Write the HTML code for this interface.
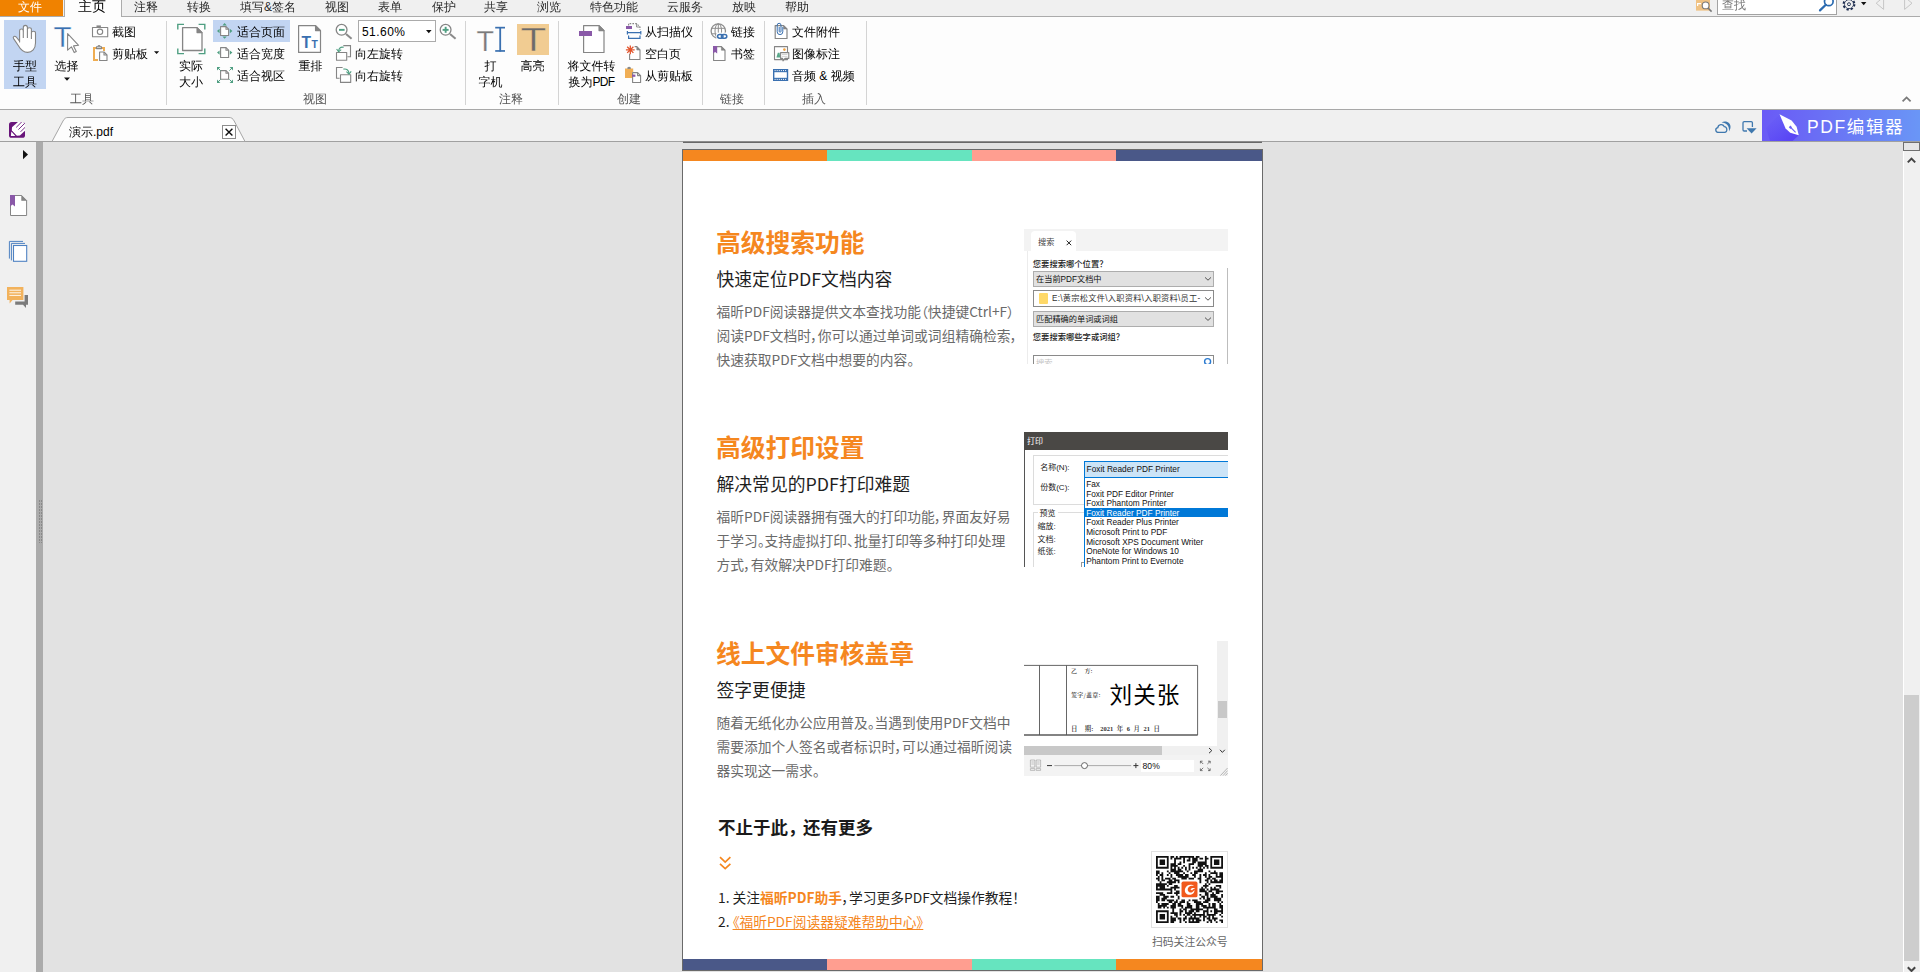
<!DOCTYPE html>
<html lang="zh-CN">
<head>
<meta charset="utf-8">
<title>演示.pdf</title>
<style>
*{box-sizing:border-box;margin:0;padding:0}
html,body{width:1920px;height:972px;overflow:hidden;background:#e2e2e2}
body{position:relative;font-family:"Liberation Sans","WenQuanYi Zen Hei","Noto Sans CJK SC",sans-serif;font-size:12px;color:#1e1e1e}
.abs{position:absolute}
svg{position:absolute;overflow:visible}
/* menu bar */
#menubar{position:absolute;left:0;top:0;width:1920px;height:17px;background:#f0f0f0;border-bottom:1px solid #ababab}
#menubar .mi{position:absolute;top:-1.3px;height:16px;line-height:16px;font-size:12px;color:#2a2a2a;white-space:nowrap}
#filetab{position:absolute;left:0;top:0;width:63px;height:16px;background:#f08200}
#hometab{position:absolute;left:64px;top:-4px;width:58px;height:22px;background:#fdfdfd;border:1px solid #ababab;border-bottom:none}
/* ribbon */
#ribbon{position:absolute;left:0;top:17px;width:1920px;height:93px;background:#fdfdfd;border-bottom:1px solid #a8a8a8}
.sep{position:absolute;top:21px;width:1px;height:84px;background:#d4d4d4}
.t{position:absolute;white-space:nowrap;font-size:12px;line-height:14px;color:#000}
.tc{position:absolute;white-space:nowrap;font-size:12px;line-height:16px;color:#000;text-align:center;transform:translateX(-50%)}
.gl{position:absolute;top:92px;white-space:nowrap;font-size:12px;line-height:14px;color:#555;transform:translateX(-50%)}
.hl{position:absolute;background:#c2d5f2}
/* tab bar */
#tabbar{position:absolute;left:0;top:110px;width:1920px;height:32px;background:#f0f0f0;border-bottom:1px solid #a0a0a0}
/* sidebar */
#side{position:absolute;left:0;top:142px;width:36px;height:830px;background:#f0f0f0}
#grip{position:absolute;left:36px;top:142px;width:7px;height:830px;background:#ababab}
/* scrollbar */
#vscroll{position:absolute;left:1903px;top:142px;width:17px;height:830px;background:#f0f0f0;border-left:1px solid #fff}
/* page */
#page{position:absolute;left:682px;top:149px;width:581px;height:822px;background:#fff;border:1px solid #6a6a6a;font-family:"Noto Sans CJK SC","Liberation Sans",sans-serif}
#page .in{position:absolute;left:-683px;top:-150px;width:1920px;height:972px}
.bar{position:absolute;height:11px}
.pimg{position:absolute;left:1024px;width:204px;overflow:hidden;background:#fff;font-family:"Liberation Sans","Noto Sans CJK SC",sans-serif;color:#222}
.pimg>div{position:absolute;white-space:nowrap}
.pimg .sp{display:inline-block}
.h1{position:absolute;left:716px;font-size:24.75px;font-weight:700;color:#f5871f;line-height:30px;white-space:nowrap}
.h2{position:absolute;left:716.5px;font-size:17.82px;color:#1f1f1f;line-height:24px;white-space:nowrap}
.bd{position:absolute;left:716.5px;font-size:13.76px;color:#6a6a6a;line-height:24px;white-space:nowrap;font-feature-settings:"palt"}
</style>
</head>
<body>

<!-- ============ MENU BAR ============ -->
<div id="menubar">
  <div id="filetab"></div>
  <div id="hometab"></div>
  <div class="mi" style="left:18px;color:#fff">文件</div>
  <div class="mi" style="left:78px;font-size:14px;color:#000;top:-2px">主页</div>
  <div class="mi" style="left:134px">注释</div>
  <div class="mi" style="left:187px">转换</div>
  <div class="mi" style="left:240px">填写&amp;签名</div>
  <div class="mi" style="left:325px">视图</div>
  <div class="mi" style="left:378px">表单</div>
  <div class="mi" style="left:432px">保护</div>
  <div class="mi" style="left:484px">共享</div>
  <div class="mi" style="left:537px">浏览</div>
  <div class="mi" style="left:590px">特色功能</div>
  <div class="mi" style="left:667px">云服务</div>
  <div class="mi" style="left:732px">放映</div>
  <div class="mi" style="left:785px">帮助</div>
</div>

<!-- ============ RIBBON ============ -->
<div id="ribbon"></div>
<div id="ribbonitems">
  <div class="hl" style="left:4px;top:20px;width:42px;height:69px"></div>
  <div class="hl" style="left:213px;top:20px;width:77px;height:22px"></div>
  <div class="abs" style="left:517px;top:24px;width:32px;height:31px;background:#f1cc92"></div>
  <div class="sep" style="left:166px"></div>
  <div class="sep" style="left:465px"></div>
  <div class="sep" style="left:558px"></div>
  <div class="sep" style="left:702px"></div>
  <div class="sep" style="left:764px"></div>
  <div class="sep" style="left:866px"></div>

  <div class="tc" style="left:25px;top:58px">手型<br>工具</div>
  <div class="tc" style="left:66.5px;top:58px">选择</div>
  <div class="t" style="left:112px;top:25px">截图</div>
  <div class="t" style="left:112px;top:47px">剪贴板</div>
  <div class="tc" style="left:191px;top:58px">实际<br>大小</div>
  <div class="t" style="left:237px;top:25px">适合页面</div>
  <div class="t" style="left:237px;top:47px">适合宽度</div>
  <div class="t" style="left:237px;top:69px">适合视区</div>
  <div class="tc" style="left:310.5px;top:58px">重排</div>
  <div class="abs" style="left:358px;top:20px;width:78px;height:22px;border:1px solid #ababab;background:#fff"></div>
  <div class="t" style="left:362px;top:25px;font-size:12px;letter-spacing:0.45px;color:#000">51.60%</div>
  <div class="t" style="left:355px;top:47px">向左旋转</div>
  <div class="t" style="left:355px;top:69px">向右旋转</div>
  <div class="tc" style="left:490.5px;top:58px">打<br>字机</div>
  <div class="tc" style="left:532.5px;top:58px">高亮</div>
  <div class="tc" style="left:591.5px;top:58px">将文件转<br>换为<span style="letter-spacing:-0.7px">PDF</span></div>
  <div class="t" style="left:645px;top:25px">从扫描仪</div>
  <div class="t" style="left:645px;top:47px">空白页</div>
  <div class="t" style="left:645px;top:69px">从剪贴板</div>
  <div class="t" style="left:731px;top:25px">链接</div>
  <div class="t" style="left:731px;top:47px">书签</div>
  <div class="t" style="left:792px;top:25px">文件附件</div>
  <div class="t" style="left:792px;top:47px">图像标注</div>
  <div class="t" style="left:792px;top:69px">音频 &amp; 视频</div>

  <div class="gl" style="left:82px">工具</div>
  <div class="gl" style="left:315px">视图</div>
  <div class="gl" style="left:511px">注释</div>
  <div class="gl" style="left:629px">创建</div>
  <div class="gl" style="left:732px">链接</div>
  <div class="gl" style="left:814px">插入</div>

  <svg id="ricons" style="left:0;top:0" width="1920" height="110" viewBox="0 0 1920 110" fill="none" stroke-linecap="butt">
    <g stroke="#858585" stroke-width="1.1" fill="#fff" stroke-linejoin="round">
      <!-- hand -->
      <path d="M19.6 42V30.8C19.6 28.3 23.3 28.3 23.3 30.8V27.5C23.3 24.6 27.4 24.6 27.4 27.5V29.6C27.4 27.1 31.4 27.1 31.4 29.6V33C31.4 30.6 35.5 30.6 35.5 33V43C35.5 49 32 52.4 27.6 52.4C23 52.4 20.6 49.6 18.6 46L13.6 38.6C12.5 36.8 14.6 35.4 16.2 37L19.6 41.2Z"/>
      <path d="M23.3 30.8V38M27.4 29.6V38M31.4 33V39" fill="none"/>
      <!-- select cursor -->
      <path d="M67.6 33.6V50.2L71.4 46.8L74.2 52.6L76.3 51.6L73.5 45.9L78.6 45.3Z"/>
      <!-- camera -->
      <rect x="92.5" y="27.5" width="15.2" height="9.2"/>
      <circle cx="100" cy="31.8" r="2.7"/>
      <rect x="96.5" y="25.4" width="4.4" height="1.6" fill="#858585" stroke="none"/>
      <!-- clipboard -->
      <path d="M104 51V48H94V60H98" stroke="#efad52" stroke-width="2" fill="none" stroke-linejoin="miter"/>
      <path d="M96.5 48.6V46.8H101.5V48.6Z" fill="#e8e8e8"/>
      <path d="M97.8 46.6Q99 44.4 100.2 46.6" fill="none"/>
      <path d="M99.6 52H104L107 55V60.5H99.6Z"/>
      <path d="M104 52V55H107" fill="none"/>
      <!-- actual size page -->
      <path d="M182.6 27.6H197L202 32.6V50.5H182.6Z" stroke-width="1.3"/>
      <path d="M197 27.6V32.6H202Z" fill="#858585"/>
      <!-- fit page -->
      <path d="M220.6 26.6H226L228.6 29.2V35.5H220.6Z"/>
      <path d="M226 26.6V29.2H228.6" fill="none"/>
      <!-- fit width -->
      <path d="M220.6 47.6H226L228.6 50.2V57.5H220.6Z"/>
      <path d="M226 47.6V50.2H228.6" fill="none"/>
      <!-- fit visible -->
      <path d="M220.6 70.6H226L228.6 73.2V79.3H220.6Z"/>
      <path d="M226 70.6V73.2H228.6" fill="none"/>
      <!-- reflow page -->
      <path d="M298.6 25.6H315.5L320.5 30.6V52.4H298.6Z" stroke-width="1.2"/>
      <path d="M315.5 25.6V30.6H320.5Z" fill="#858585"/>
      <!-- zoom out / in -->
      <path d="M346 34L351.6 38.8" stroke-width="2" stroke="#8a8a8a"/>
      <circle cx="341.6" cy="29.8" r="5.4" stroke-width="1.3"/>
      <path d="M450 34L455.6 38.8" stroke-width="2" stroke="#8a8a8a"/>
      <circle cx="445.6" cy="29.8" r="5.4" stroke-width="1.3"/>
      <!-- rotate left -->
      <path d="M343.3 45.6H350.5V56.7H347.4" fill="none" stroke-linejoin="miter"/>
      <rect x="336.5" y="52.5" width="10.2" height="7.7"/>
      <!-- rotate right -->
      <path d="M342.6 67.5H336.5V78.3H339.6" fill="none" stroke-linejoin="miter"/>
      <rect x="340.5" y="74.7" width="10.2" height="7.7"/>
      <!-- convert to pdf page -->
      <path d="M583.6 25.6H599L604 30.6V52.5H583.6Z" stroke-width="1.2"/>
      <path d="M599 25.6V30.6H604Z" fill="#858585"/>
      <!-- scanner page (dashed) -->
      <path d="M628.6 25.4V23.6H636.6L640 27V30" fill="none" stroke-dasharray="1.6 1.2"/>
      <path d="M636.6 23.6V27H640" fill="none" stroke-width="0.9"/>
      <!-- blank page -->
      <path d="M629.6 54V59.5H640V50L636.8 46.6H634.6" />
      <path d="M636.8 46.6V50H640Z" fill="#858585" stroke-width="0.6"/>
      <!-- from clipboard -->
      <path d="M632.6 72.6H637.6L640.6 75.6V82.5H632.6Z"/>
      <path d="M637.6 72.6V75.6H640.6" fill="none"/>
      <!-- globe -->
      <circle cx="718.3" cy="31" r="7.2" stroke="#8d8d8d" stroke-width="1.3"/>
      <ellipse cx="718.3" cy="31" rx="3.3" ry="7.2" fill="none" stroke="#8d8d8d" stroke-width="1"/>
      <path d="M718.3 23.8V38.2M711.6 28.3H725M711.6 33.8H725" stroke="#8d8d8d" stroke-width="1" fill="none"/>
      <rect x="716.4" y="32.6" width="11.2" height="7" stroke="none"/>
      <!-- bookmark page -->
      <path d="M713.6 46.6H721.4L725 50.2V60.5H713.6Z"/>
      <path d="M721.4 46.6V50.2H725Z" fill="#858585" stroke-width="0.6"/>
      <!-- attachment page -->
      <path d="M775.2 25.6H783.6L787 29V38.5H775.2Z" stroke-width="1.2"/>
      <path d="M783.6 25.6V29H787Z" fill="#858585" stroke-width="0.6"/>
      <!-- image annotation -->
      <rect x="774.5" y="46.6" width="13" height="13"/>
      <path d="M780.6 52.6H788.8V58.4H785L783 60.8L782.6 58.4H780.6Z"/>
      <path d="M782 54.5H787.4M782 56.4H787.4" stroke="#c9c9c9" stroke-width="0.8" fill="none"/>
    </g>
    <!-- coloured parts -->
    <g fill="#4f9f82" stroke="none">
      <!-- fit page arrows -->
      <path d="M217 31L219.6 28.8V33.2ZM232.4 31L229.8 28.8V33.2ZM224.6 23L222.4 25.4H226.8ZM224.6 38.8L222.4 36.6H226.8Z"/>
      <path d="M217 52.6L219.6 50.4V54.8ZM232.4 52.6L229.8 50.4V54.8Z"/>
      <!-- fit visible arrows -->
      <path d="M217 67H220.4L217 70.4ZM233 67H229.6L233 70.4ZM217 83H220.4L217 79.6ZM233 83H229.6L233 79.6Z"/>
      <!-- zoom minus/plus -->
      <rect x="339" y="28.9" width="5.6" height="1.9"/>
      <rect x="442.6" y="28.9" width="6" height="1.9"/>
      <rect x="444.7" y="26.8" width="1.9" height="6"/>
    </g>
    <g fill="none" stroke="#4f9f82" stroke-width="1">
      <path d="M218 68L220.6 70.6M232 68L229.4 70.6M218 82L220.6 79.4M232 82L229.4 79.4"/>
      <path d="M177.8 29.6V24.4H184M198.6 24.4H204.8V29.6M177.8 48.4V53.6H184M198.6 53.6H204.8V48.4" stroke-width="1.4"/>
      <!-- rotate arrows -->
      <path d="M343.6 47.4C341 46.4 338.8 47.8 338.6 51.4" stroke-width="1.2"/>
      <path d="M336.6 49L338.6 51.8L341.2 49.6" stroke-width="1.1"/>
      <path d="M343.4 69.2C346.4 68.4 348.8 70 349 73.6" stroke-width="1.2"/>
      <path d="M346.4 71.6L349 74.2L351.2 71.4" stroke-width="1.1"/>
    </g>
    <!-- green mountain / sun -->
    <path d="M776.4 57.6L777.8 52.8H779.6L780.2 57.6Z" fill="#5aa88a"/>
    <circle cx="784.4" cy="49.6" r="1.3" fill="#f0a040"/>
    <!-- blue parts -->
    <g fill="#3a70b0" stroke="none">
      <rect x="495.2" y="26.8" width="9.8" height="1.7"/>
      <rect x="495.2" y="50.1" width="9.8" height="1.7"/>
      <rect x="499.3" y="27" width="1.8" height="24.6"/>
      <!-- film -->
      <rect x="773" y="69" width="15.2" height="12"/>
    </g>
    <rect x="774.4" y="72.2" width="12.4" height="5.6" fill="#fff"/>
    <path d="M774.6 70.6H787M774.6 79.4H787" stroke="#fff" stroke-width="1" stroke-dasharray="1 1.1" fill="none"/>
    <g fill="none" stroke="#3a70b0" stroke-width="1.2">
      <!-- scanner -->
      <path d="M627 32.7H641M627.4 31V34.6M640.8 31V34.6M628.6 35.6V38.4H640V35.6"/>
      <!-- chain link -->
      <rect x="717.6" y="34.4" width="5.4" height="3.8" rx="1.9" stroke-width="1.5"/>
      <rect x="721.4" y="34.4" width="5.4" height="3.8" rx="1.9" stroke-width="1.5"/>
      <!-- paperclip -->
      <path d="M779.2 27V31.3A0.9 0.9 0 0 0 781 31.3V25.2A1.9 1.9 0 0 0 777.2 25.2V31.8A2.8 2.8 0 0 0 782.8 31.8V27" stroke-width="1"/>
    </g>
    <!-- purple parts -->
    <g fill="#8a59a8" stroke="none">
      <rect x="579" y="31" width="13" height="5"/>
      <rect x="626" y="26" width="6" height="3"/>
      <rect x="631" y="74.6" width="4.4" height="2.2"/>
      <path d="M713 46H717.2V53.4L715.1 52L713 53.4Z"/>
    </g>
    <!-- orange clipboard (from clipboard) -->
    <path d="M625 68.6H633.2V72H632V78H625Z" fill="#f0ae55"/>
    <path d="M627.4 69V67.6Q629.1 66 630.8 67.6V69Z" fill="#8a8a8a"/>
    <!-- red asterisk -->
    <path d="M630.3 45.4V54.2M625.9 49.8H634.7M627.2 46.7L633.4 52.9M633.4 46.7L627.2 52.9" stroke="#e2532b" stroke-width="1.3" fill="none"/>
    <!-- dropdown arrows -->
    <path d="M64 77.6H70L67 80.8ZM154 51.2H159.2L156.6 54ZM426 30H431.6L428.8 33.2Z" fill="#111"/>
    <!-- icon letters (real text) -->
    <g font-family="Liberation Sans,sans-serif" stroke="none">
      <text x="53.6" y="47" font-size="29.6" fill="#3a70b0" stroke="#fdfdfd" stroke-width="0.35">T</text>
      <text x="476.4" y="51" font-size="28.6" fill="#7b7b7b" stroke="#fdfdfd" stroke-width="0.25">T</text>
      <text transform="translate(520.6 51) scale(1.3 1)" font-size="32.6" fill="#6b6b6b" stroke="#f1cc92" stroke-width="0.45">T</text>
      <text x="301.4" y="48" font-size="15.6" font-weight="700" fill="#3a70b0">T</text>
      <text x="311.4" y="48" font-size="10.4" font-weight="700" fill="#3a70b0">T</text>
    </g>
    <!-- menu right icons -->
    <rect x="1696" y="-2" width="14" height="12.6" fill="#f0c283"/>
    <path d="M1697.6 6V3.6H1701" stroke="#fff" stroke-width="1.2" fill="none"/>
    <path d="M1708 8L1711.6 11.6" stroke="#777" stroke-width="1.6" fill="none"/>
    <circle cx="1705.6" cy="5.4" r="3.4" fill="#fff" stroke="#777" stroke-width="1.1"/>
    <rect x="1717.5" y="-4" width="119" height="18.5" fill="#fff" stroke="#a3a3a3" stroke-width="1"/>
    <circle cx="1828.8" cy="1.4" r="4.3" fill="none" stroke="#2a6ab0" stroke-width="1.7"/>
    <path d="M1825.8 4.8L1820 10.4" stroke="#2a6ab0" stroke-width="2.2" stroke-linecap="round" fill="none"/>
    <circle cx="1849" cy="4.2" r="5.4" fill="none" stroke="#1c2b4d" stroke-width="2" stroke-dasharray="2.3 1.95"/>
    <circle cx="1849" cy="4.2" r="4.4" fill="none" stroke="#1c2b4d" stroke-width="0.8"/>
    <circle cx="1849" cy="4.2" r="3.7" fill="#f0f0f0" stroke="none"/>
    <circle cx="1849" cy="4.2" r="1.5" fill="none" stroke="#1c2b4d" stroke-width="0.9"/>
    <path d="M1861 2H1866.4L1863.7 5.2Z" fill="#111"/>
    <path d="M1883.6 -3V9.4L1876.2 3.2Z" fill="none" stroke="#c6c6c6" stroke-width="1"/>
    <path d="M1904.6 -3V9.4L1912 3.2Z" fill="none" stroke="#c6c6c6" stroke-width="1"/>
    <!-- collapse caret -->
    <path d="M1902.6 101.4L1906.6 97.4L1910.6 101.4" stroke="#7a7a7a" stroke-width="1.8" fill="none"/>
  </svg>
  <div class="t" style="left:1722px;top:-2px;color:#777;line-height:14px">查找</div>
</div>

<!-- ============ TAB BAR ============ -->
<div id="tabbar">
  <svg style="left:0;top:0" width="1920" height="32" viewBox="0 110 1920 32" fill="none">
    <!-- foxit logo -->
    <clipPath id="fxc"><rect x="9" y="122" width="16" height="15.8" rx="2.6"/></clipPath>
    <rect x="9" y="122" width="16" height="15.8" rx="2.6" fill="#68147a"/>
    <g clip-path="url(#fxc)">
      <path d="M12 127.2L18.6 121.4H25.6V130.2L19.9 135.4L16.6 135.8L11.8 130.8Z" fill="#fff"/>
      <path d="M16.2 127.4L22 121.6M18.4 129.6L25.4 122.6M20.6 131.8L25.6 126.8" stroke="#68147a" stroke-width="0.9"/>
      <path d="M11.2 130.4L16.8 136.4" stroke="#68147a" stroke-width="0.8"/>
      <path d="M10.9 135.9L11.3 131.6L15.4 135.9Z" fill="#fff"/>
    </g>
    <!-- doc tab -->
    <path d="M52 141.5L63 121C64.5 118.4 65.6 117.5 68 117.5H229C231.4 117.5 232.8 118.4 234.2 121L245 141.5Z" fill="#fdfdfd" stroke="#a6a6a6" stroke-width="1"/>
    <rect x="222.5" y="125.5" width="13" height="13" fill="#fff" stroke="#8c8c8c"/>
    <path d="M225.6 128.8L232.4 135.6M232.4 128.8L225.6 135.6" stroke="#111" stroke-width="1.4"/>
    <!-- cloud -->
    <path d="M1718.8 132.4C1715.4 132.4 1714.6 128.4 1717.8 127.6C1718.4 124.2 1722.8 123.6 1724.2 126.6C1727.2 126.2 1728 132.4 1724.6 132.4Z" stroke="#3f78ae" stroke-width="1.3"/>
    <path d="M1721.6 122.6C1725.4 119.8 1731.6 122.8 1730.4 128.2L1729 131.4C1729.6 126.4 1726.6 122.6 1721.6 122.6Z" fill="#3f78ae"/>
    <!-- download -->
    <path d="M1752.4 127V122.8Q1752.4 121.6 1751.2 121.6H1744.2Q1743 121.6 1743 122.8V129.8Q1743 131 1744.2 131H1747" stroke="#3f78ae" stroke-width="1.3"/>
    <path d="M1746.6 128.2H1756.6L1751.6 133.4Z" fill="#3f78ae"/>
  </svg>
  <div class="t" style="left:69px;top:15px;line-height:14px">演示.pdf</div>
  <div class="abs" id="pdfedit" style="left:1762px;top:0;width:158px;height:31px;background:linear-gradient(90deg,#6a5af6 0%,#6a6ef5 35%,#6a96f6 100%);overflow:hidden">
    <svg style="left:0;top:0" width="158" height="31" viewBox="1762 110 158 31">
      <defs><linearGradient id="shd" x1="0" y1="0" x2="1" y2="1"><stop offset="0.15" stop-color="#5a46f5" stop-opacity="0"/><stop offset="0.8" stop-color="#5a46f5" stop-opacity="1"/></linearGradient></defs>
      <path d="M1779.5 114.3L1798.8 135.2L1792.6 141H1770L1766 128Z" fill="url(#shd)"/>
      <path d="M1779.5 114.3L1791.6 120.6L1796.6 126.8L1798.8 135.2L1790.2 132.8L1785.6 128.6Z" fill="#fff"/>
      <path d="M1790.4 127.2L1795.6 132.4" stroke="#6a62f5" stroke-width="1.2" fill="none"/>
      <path d="M1790.4 125.4L1792 127.2L1790.4 129L1788.8 127.2Z" fill="#6a62f5"/>
    </svg>
    <div class="abs" style="left:45px;top:4.5px;line-height:24px;font-size:17.5px;letter-spacing:1.6px;color:#fff;white-space:nowrap;font-family:'Liberation Sans','Noto Sans CJK SC',sans-serif">PDF编辑器</div>
  </div>
</div>

<!-- ============ SIDEBAR ============ -->
<div id="side">
  <svg style="left:0;top:0" width="36" height="830" viewBox="0 142 36 830" fill="none">
    <path d="M23 150L28 154.6L23 159.2Z" fill="#111"/>
    <!-- bookmark panel -->
    <path d="M10.5 195.5H21.6L26.6 200.5V215.5H10.5Z" fill="#fff" stroke="#858585"/>
    <path d="M21.6 195.5V200.5H26.6Z" fill="#858585" stroke="#858585" stroke-width="0.6"/>
    <path d="M10 195H15V206.6L12.5 204.6L10 206.6Z" fill="#8a59a8"/>
    <!-- pages panel -->
    <path d="M9.4 258.6V241.4H23M11.4 260.4V243.4H25" stroke="#4f82c2" stroke-width="1"/>
    <rect x="13.5" y="245.5" width="13.2" height="15.8" fill="#fff" stroke="#4f82c2" stroke-width="1.1"/>
    <!-- comments panel -->
    <path d="M24.6 295H28V304.8H26V308L23 304.8H15.2V301.4H24.6Z" fill="#7b7b7b"/>
    <path d="M7 287H23.4V300H12.6L9.6 303.4V300H7Z" fill="#f2b25c"/>
    <path d="M9.4 290.2H21M9.4 292.8H21M9.4 295.4H21" stroke="#fff" stroke-width="0.9"/>
  </svg>
</div>
<div id="grip"><svg style="left:0;top:0" width="7" height="830" viewBox="36 142 7 830"><path d="M39.5 500.5V543M41.5 500.5V543" stroke="#666" stroke-width="1" stroke-dasharray="1 2" fill="none"/></svg></div>

<!-- ============ SCROLLBAR ============ -->
<div id="vscroll">
  <div class="abs" style="left:0;top:553px;width:15px;height:266px;background:#cdcdcd"></div>
  <svg style="left:-1px;top:0" width="17" height="830" viewBox="1903 142 17 830" fill="none">
    <rect x="1903.5" y="142.5" width="16" height="8" fill="#e6e6e6" stroke="#6f6f6f"/>
    <path d="M1907.8 162.4L1911.5 158.6L1915.2 162.4" stroke="#444" stroke-width="2"/>
    <path d="M1907.8 967.2L1911.5 971L1915.2 967.2" stroke="#444" stroke-width="2"/>
  </svg>
</div>

<!-- ============ PAGE ============ -->
<div class="abs" style="left:683px;top:141px;width:579px;height:1px;background:#8c8c8c"></div><div class="abs" style="left:683px;top:142px;width:579px;height:1px;background:#686868"></div>
<div id="page">
  <div class="in">
    <div class="bar" style="left:683px;top:150px;width:144px;background:#f5871f"></div>
    <div class="bar" style="left:827px;top:150px;width:145px;background:#66e4bf"></div>
    <div class="bar" style="left:972px;top:150px;width:144px;background:#ff9e90"></div>
    <div class="bar" style="left:1116px;top:150px;width:146px;background:#4a5888"></div>
    <div class="bar" style="left:683px;top:959px;width:144px;background:#4a5888"></div>
    <div class="bar" style="left:827px;top:959px;width:145px;background:#ff9e90"></div>
    <div class="bar" style="left:972px;top:959px;width:144px;background:#66e4bf"></div>
    <div class="bar" style="left:1116px;top:959px;width:146px;background:#f5871f"></div>

    <div class="h1" id="s1h1" style="top:225.5px">高级搜索功能</div>
    <div class="h2" id="s1h2" style="top:266px">快速定位PDF文档内容</div>
    <div class="bd" id="s1b1" style="top:298.5px">福昕PDF阅读器提供文本查找功能（快捷键Ctrl+F）</div>
    <div class="bd" id="s1b2" style="top:322.5px">阅读PDF文档时，你可以通过单词或词组精确检索，</div>
    <div class="bd" id="s1b3" style="top:346.5px">快速获取PDF文档中想要的内容。</div>

    <div class="h1" id="s2h1" style="top:430.5px">高级打印设置</div>
    <div class="h2" id="s2h2" style="top:471px">解决常见的PDF打印难题</div>
    <div class="bd" id="s2b1" style="top:503.5px">福昕PDF阅读器拥有强大的打印功能，界面友好易</div>
    <div class="bd" id="s2b2" style="top:527.5px">于学习。支持虚拟打印、批量打印等多种打印处理</div>
    <div class="bd" id="s2b3" style="top:551.5px">方式，有效解决PDF打印难题。</div>

    <div class="h1" id="s3h1" style="top:636.5px">线上文件审核盖章</div>
    <div class="h2" id="s3h2" style="top:677px">签字更便捷</div>
    <div class="bd" id="s3b1" style="top:709.5px">随着无纸化办公应用普及。当遇到使用PDF文档中</div>
    <div class="bd" id="s3b2" style="top:733.5px">需要添加个人签名或者标识时，可以通过福昕阅读</div>
    <div class="bd" id="s3b3" style="top:757.5px">器实现这一需求。</div>

    <div class="abs" id="s4h" style="left:718px;top:815px;font-size:17.5px;font-weight:700;color:#1a1a1a;line-height:24px;white-space:nowrap">不止于此<span style="letter-spacing:-2.6px">，</span>还有更多</div>
    <svg style="left:719px;top:856px" width="13" height="15" viewBox="0 0 13 15" fill="none"><path d="M1 1.2L6.2 6L11.4 1.2M1 7.8L6.2 12.6L11.4 7.8" stroke="#f5871f" stroke-width="1.7"/></svg>
    <div class="abs" id="s4l1" style="left:718px;top:885px;font-size:13.76px;color:#1f1f1f;line-height:24px;white-space:nowrap;font-feature-settings:'palt'">1. 关注<b style="color:#f5871f">福昕PDF助手</b>，学习更多PDF文档操作教程！</div>
    <div class="abs" id="s4l2" style="left:718px;top:909px;font-size:13.76px;color:#1f1f1f;line-height:24px;white-space:nowrap;font-feature-settings:'palt'">2. <span style="color:#f5871f;text-decoration:underline;text-underline-offset:2px">《福昕PDF阅读器疑难帮助中心》</span></div>
    <div class="abs" id="qrlabel" style="left:1152px;top:932px;font-size:10.8px;color:#666;line-height:18px;white-space:nowrap">扫码关注公众号</div>

    <!-- image 1 : search panel -->
    <div class="pimg" id="im1" style="top:229px;height:135px;font-size:8.2px;line-height:10px">
      <div style="left:0;top:0;width:204px;height:22px;background:#f3f3f3"></div>
      <div style="left:6.7px;top:2px;width:45.3px;height:20px;background:#fff;border-radius:4px 4px 0 0"></div>
      <div style="left:3px;top:22px;width:1px;height:113px;background:#ececec"></div>
      <div style="left:203px;top:39px;width:1px;height:96px;background:#bdbdbd"></div>
      <div style="left:14px;top:9px;color:#444">搜索</div>
      <svg style="left:42px;top:10.5px" width="6" height="6" viewBox="0 0 6 6"><path d="M0.6 0.6L5.2 5.2M5.2 0.6L0.6 5.2" stroke="#222" stroke-width="1" fill="none"/></svg>
      <div style="left:8.8px;top:30px;font-weight:500;font-size:8.3px;color:#1a1a1a">您要搜索哪个位置？</div>
      <div style="left:8.8px;top:42px;width:181.2px;height:15.5px;background:#e1e1e1;border:1px solid #adadad"></div>
      <div style="left:12px;top:46.2px;color:#111">在当前PDF文档中</div>
      <div style="left:8.8px;top:61.3px;width:181.2px;height:16.5px;background:#fff;border:1px solid #8a8a8a"></div>
      <div style="left:15px;top:64px;width:8.6px;height:10.6px;background:#ffd968;border-radius:1px"></div>
      <div style="left:28px;top:65.4px;color:#333;letter-spacing:0.28px">E:\黄宗松文件\入职资料\入职资料\员工-</div>
      <div style="left:8.8px;top:82px;width:181.2px;height:16px;background:#e1e1e1;border:1px solid #adadad"></div>
      <div style="left:12px;top:86px;color:#111">匹配精确的单词或词组</div>
      <div style="left:8.8px;top:103px;font-weight:500;font-size:8.3px;color:#1a1a1a">您要搜索哪些字或词组？</div>
      <div style="left:8.8px;top:126.4px;width:181.2px;height:20px;background:#fff;border:1px solid #8a8a8a"></div>
      <div style="left:12px;top:129.5px;color:#c4c4c4">搜索</div>
      <svg style="left:0;top:0" width="204" height="135" viewBox="0 0 204 135" fill="none">
        <path d="M181 48.4L184 51.2L187 48.4M181 68.4L184 71.2L187 68.4M181 88.6L184 91.4L187 88.6" stroke="#444" stroke-width="0.9"/>
        <circle cx="183.6" cy="132.6" r="3" stroke="#2a7ad0" stroke-width="1.4"/>
      </svg>
    </div>
    <!-- image 2 : print dialog -->
    <div class="pimg" id="im2" style="top:432px;height:135px;font-size:8px;line-height:10px">
      <div style="left:0;top:0;width:204px;height:18px;background:#4a4845"></div>
      <div style="left:0;top:18px;width:1px;height:117px;background:#555"></div>
      <div style="left:3px;top:5px;color:#fff">打印</div>
      <div style="left:9.3px;top:23.3px;width:210px;height:50px;border:1px solid #dcdcdc"></div>
      <div style="left:9.3px;top:80px;width:210px;height:70px;border:1px solid #dcdcdc"></div>
      <div style="left:13.5px;top:76px;width:20px;height:9px;background:#fff"></div>
      <div style="left:15.5px;top:76.6px;color:#222">预览</div>
      <div style="left:16.2px;top:31.4px;color:#222">名称(N):</div>
      <div style="left:16.2px;top:51.4px;color:#222">份数(C):</div>
      <div style="left:13.4px;top:90.4px;color:#222">缩放:</div>
      <div style="left:13.4px;top:103.2px;color:#222">文档:</div>
      <div style="left:13.4px;top:115.4px;color:#222">纸张:</div>
      <div style="left:57px;top:130px;width:3px;height:6px;border:1px solid #999;border-right:none"></div>
      <div style="left:60.2px;top:46px;width:150px;height:95px;background:#fff;border-left:1px solid #0078d7"></div>
      <div style="left:60.2px;top:29px;width:150px;height:17.2px;background:#cce4f7;border:1px solid #0078d7;border-bottom-width:1.6px"></div>
      <div style="left:62.6px;top:31.8px;color:#111;font-size:8.3px" class="pl">Foxit Reader PDF Printer</div>
      <div style="left:61.2px;top:75.8px;width:150px;height:9.3px;background:#0078d7"></div>
      <div class="pl" style="left:62.2px;top:47.9px;font-size:8.3px;line-height:9.64px;color:#111;white-space:pre">Fax
Foxit PDF Editor Printer
Foxit Phantom Printer
<span style="position:static;color:#fff">Foxit Reader PDF Printer</span>
Foxit Reader Plus Printer
Microsoft Print to PDF
Microsoft XPS Document Writer
OneNote for Windows 10
Phantom Print to Evernote</div>
    </div>
    <!-- image 3 : signature -->
    <div class="pimg" id="im3" style="top:641px;height:135px;font-size:8px;line-height:10px">
      <div style="left:193px;top:0;width:11px;height:114px;background:#f0f0f0"></div>
      <div style="left:193.6px;top:60px;width:9.6px;height:17px;background:#c8c8c8"></div>
      <div style="left:0;top:105.3px;width:193px;height:8.7px;background:#f0f0f0"></div>
      <div style="left:0;top:105.3px;width:138.4px;height:8.7px;background:#c8c8c8"></div>
      <div style="left:0;top:114px;width:204px;height:21px;background:#f3f3f3"></div>
      <div style="left:116.8px;top:118.7px;width:53.2px;height:12px;background:#fff"></div>
      <div style="left:118.6px;top:120px;color:#111;font-size:8.6px">80%</div>
      <div style="left:47px;top:26.4px;font-family:'Noto Serif CJK SC',serif;font-size:6px;line-height:8px;font-weight:600;color:#333">乙<span class="sp" style="width:7.6px"></span>方:</div>
      <div style="left:47px;top:49.6px;font-family:'Noto Serif CJK SC',serif;font-size:6px;line-height:8px;font-weight:600;color:#333;letter-spacing:0.25px">签字/盖章:</div>
      <div style="left:47px;top:84.2px;font-family:'Liberation Serif','Noto Serif CJK SC',serif;font-size:6.4px;line-height:8px;font-weight:600;color:#333;word-spacing:2px">日<span class="sp" style="width:7.4px"></span>期:<span class="sp" style="width:7px"></span>2021 年 6 月 21 日</div>
      <div style="left:85.6px;top:38.6px;font-family:'Noto Sans CJK SC',sans-serif;font-weight:400;font-size:22.6px;line-height:28px;letter-spacing:1px;color:#000">刘关张</div>
      <svg style="left:0;top:0" width="204" height="135" viewBox="0 0 204 135" fill="none">
        <path d="M0 24.4H173.6V94H0M15.5 24.4V94M42.5 24.4V94" stroke="#555" stroke-width="0.9"/>
        <path d="M0 94H173.6" stroke="#555" stroke-width="1.2"/>
        <path d="M196 108.8L198.4 111.4L200.8 108.8M185 107L187.8 109.6L185 112.2" stroke="#333" stroke-width="1"/>
        <!-- status icons -->
        <path d="M6.4 119H10.8V126.2H6.4ZM12.2 119H16.6V126.2H12.2ZM6.4 127.6H10.8V129.4H6.4ZM12.2 127.6H16.6V129.4H12.2ZM7.4 121H9.8M7.4 123H9.8M13.2 121H15.6M13.2 123H15.6" stroke="#8a8a8a" stroke-width="0.5"/>
        <path d="M23 124.6H28M109.4 124.6H114.4M111.9 122.1V127.1" stroke="#333" stroke-width="1"/>
        <path d="M30.4 124.6H107.2" stroke="#8a8a8a" stroke-width="0.7"/>
        <circle cx="60.5" cy="124.6" r="3" fill="#fff" stroke="#444" stroke-width="0.8"/>
        <path d="M176.4 122.4V120.2H178.6M184 120.2H186.2V122.4M176.4 127.4V129.6H178.6M184 129.6H186.2V127.4M176.6 120.4L179.2 123M186 120.4L183.4 123M176.6 129.4L179.2 126.8M186 129.4L183.4 126.8" stroke="#444" stroke-width="0.7"/>
        <path d="M203.6 127L196.4 134.6M203.6 129.6L199 134.6M203.6 132.2L201.4 134.6" stroke="#9a9a9a" stroke-width="0.7"/>
      </svg>
    </div>
    <div class="abs" style="left:1151px;top:851px;width:77px;height:77px;border:1px solid #e2e2e2;background:#fff"></div>
    <svg style="left:1156px;top:856px" width="67" height="67" viewBox="0 0 37 37">
      <path d="M0 0h7v1h-7zM8 0h2v1h-2zM11 0h1v1h-1zM13 0h8v1h-8zM22 0h2v1h-2zM27 0h1v1h-1zM30 0h7v1h-7zM0 1h1v1h-1zM6 1h1v1h-1zM8 1h1v1h-1zM10 1h4v1h-4zM15 1h1v1h-1zM18 1h1v1h-1zM20 1h3v1h-3zM24 1h2v1h-2zM27 1h2v1h-2zM30 1h1v1h-1zM36 1h1v1h-1zM0 2h1v1h-1zM2 2h3v1h-3zM6 2h1v1h-1zM10 2h1v1h-1zM15 2h1v1h-1zM17 2h2v1h-2zM20 2h3v1h-3zM27 2h1v1h-1zM30 2h1v1h-1zM32 2h3v1h-3zM36 2h1v1h-1zM0 3h1v1h-1zM2 3h3v1h-3zM6 3h1v1h-1zM10 3h1v1h-1zM13 3h1v1h-1zM15 3h1v1h-1zM20 3h2v1h-2zM23 3h5v1h-5zM30 3h1v1h-1zM32 3h3v1h-3zM36 3h1v1h-1zM0 4h1v1h-1zM2 4h3v1h-3zM6 4h1v1h-1zM8 4h3v1h-3zM12 4h2v1h-2zM18 4h3v1h-3zM23 4h5v1h-5zM30 4h1v1h-1zM32 4h3v1h-3zM36 4h1v1h-1zM0 5h1v1h-1zM6 5h1v1h-1zM8 5h4v1h-4zM15 5h1v1h-1zM18 5h1v1h-1zM23 5h3v1h-3zM27 5h2v1h-2zM30 5h1v1h-1zM36 5h1v1h-1zM0 6h7v1h-7zM8 6h1v1h-1zM10 6h1v1h-1zM12 6h1v1h-1zM14 6h1v1h-1zM16 6h1v1h-1zM18 6h1v1h-1zM20 6h1v1h-1zM22 6h1v1h-1zM24 6h1v1h-1zM26 6h1v1h-1zM28 6h1v1h-1zM30 6h7v1h-7zM8 7h3v1h-3zM12 7h2v1h-2zM16 7h1v1h-1zM18 7h1v1h-1zM23 7h3v1h-3zM0 8h2v1h-2zM6 8h1v1h-1zM8 8h7v1h-7zM17 8h1v1h-1zM21 8h5v1h-5zM29 8h1v1h-1zM32 8h1v1h-1zM0 9h2v1h-2zM3 9h1v1h-1zM7 9h1v1h-1zM10 9h3v1h-3zM15 9h1v1h-1zM19 9h1v1h-1zM21 9h2v1h-2zM27 9h1v1h-1zM30 9h4v1h-4zM35 9h2v1h-2zM0 10h1v1h-1zM2 10h2v1h-2zM6 10h1v1h-1zM8 10h1v1h-1zM11 10h4v1h-4zM16 10h2v1h-2zM20 10h2v1h-2zM24 10h1v1h-1zM26 10h2v1h-2zM29 10h1v1h-1zM33 10h1v1h-1zM35 10h2v1h-2zM1 11h1v1h-1zM3 11h1v1h-1zM8 11h1v1h-1zM12 11h6v1h-6zM21 11h1v1h-1zM24 11h1v1h-1zM27 11h1v1h-1zM29 11h2v1h-2zM33 11h4v1h-4zM0 12h2v1h-2zM3 12h1v1h-1zM5 12h3v1h-3zM9 12h2v1h-2zM14 12h3v1h-3zM18 12h3v1h-3zM23 12h2v1h-2zM28 12h2v1h-2zM31 12h2v1h-2zM36 12h1v1h-1zM1 13h1v1h-1zM3 13h2v1h-2zM7 13h2v1h-2zM10 13h3v1h-3zM24 13h1v1h-1zM27 13h2v1h-2zM30 13h1v1h-1zM32 13h2v1h-2zM35 13h2v1h-2zM2 14h1v1h-1zM6 14h5v1h-5zM12 14h1v1h-1zM24 14h1v1h-1zM28 14h1v1h-1zM30 14h7v1h-7zM0 15h6v1h-6zM7 15h2v1h-2zM27 15h1v1h-1zM29 15h1v1h-1zM0 16h5v1h-5zM6 16h1v1h-1zM10 16h2v1h-2zM26 16h3v1h-3zM33 16h3v1h-3zM0 17h1v1h-1zM2 17h3v1h-3zM8 17h5v1h-5zM25 17h1v1h-1zM27 17h1v1h-1zM30 17h1v1h-1zM32 17h1v1h-1zM35 17h1v1h-1zM0 18h9v1h-9zM10 18h1v1h-1zM24 18h3v1h-3zM28 18h1v1h-1zM30 18h5v1h-5zM8 19h1v1h-1zM11 19h2v1h-2zM24 19h4v1h-4zM29 19h2v1h-2zM33 19h4v1h-4zM0 20h4v1h-4zM6 20h3v1h-3zM10 20h3v1h-3zM27 20h2v1h-2zM31 20h1v1h-1zM33 20h2v1h-2zM2 21h3v1h-3zM11 21h1v1h-1zM24 21h1v1h-1zM27 21h2v1h-2zM30 21h3v1h-3zM36 21h1v1h-1zM0 22h2v1h-2zM4 22h3v1h-3zM8 22h2v1h-2zM12 22h1v1h-1zM25 22h2v1h-2zM28 22h1v1h-1zM30 22h4v1h-4zM36 22h1v1h-1zM0 23h2v1h-2zM3 23h3v1h-3zM12 23h1v1h-1zM24 23h1v1h-1zM26 23h1v1h-1zM28 23h2v1h-2zM32 23h4v1h-4zM0 24h2v1h-2zM3 24h2v1h-2zM6 24h4v1h-4zM11 24h1v1h-1zM14 24h2v1h-2zM18 24h1v1h-1zM20 24h3v1h-3zM27 24h3v1h-3zM32 24h4v1h-4zM0 25h1v1h-1zM7 25h2v1h-2zM10 25h2v1h-2zM13 25h3v1h-3zM17 25h1v1h-1zM21 25h4v1h-4zM26 25h3v1h-3zM34 25h1v1h-1zM36 25h1v1h-1zM1 26h1v1h-1zM3 26h4v1h-4zM9 26h2v1h-2zM12 26h2v1h-2zM17 26h2v1h-2zM22 26h4v1h-4zM29 26h1v1h-1zM31 26h2v1h-2zM35 26h1v1h-1zM1 27h5v1h-5zM8 27h3v1h-3zM12 27h3v1h-3zM17 27h3v1h-3zM22 27h2v1h-2zM25 27h3v1h-3zM29 27h1v1h-1zM31 27h2v1h-2zM35 27h2v1h-2zM1 28h2v1h-2zM4 28h1v1h-1zM6 28h1v1h-1zM8 28h3v1h-3zM14 28h1v1h-1zM16 28h4v1h-4zM22 28h2v1h-2zM26 28h7v1h-7zM35 28h2v1h-2zM9 29h1v1h-1zM13 29h1v1h-1zM15 29h2v1h-2zM19 29h7v1h-7zM28 29h1v1h-1zM32 29h2v1h-2zM36 29h1v1h-1zM0 30h7v1h-7zM9 30h1v1h-1zM13 30h2v1h-2zM16 30h1v1h-1zM18 30h3v1h-3zM22 30h2v1h-2zM26 30h3v1h-3zM30 30h1v1h-1zM32 30h5v1h-5zM0 31h1v1h-1zM6 31h1v1h-1zM8 31h4v1h-4zM13 31h1v1h-1zM16 31h4v1h-4zM21 31h1v1h-1zM26 31h1v1h-1zM28 31h1v1h-1zM32 31h2v1h-2zM36 31h1v1h-1zM0 32h1v1h-1zM2 32h3v1h-3zM6 32h1v1h-1zM10 32h2v1h-2zM13 32h1v1h-1zM15 32h1v1h-1zM17 32h2v1h-2zM20 32h7v1h-7zM28 32h5v1h-5zM35 32h1v1h-1zM0 33h1v1h-1zM2 33h3v1h-3zM6 33h1v1h-1zM8 33h1v1h-1zM11 33h1v1h-1zM16 33h1v1h-1zM19 33h1v1h-1zM21 33h1v1h-1zM24 33h1v1h-1zM26 33h2v1h-2zM29 33h1v1h-1zM31 33h1v1h-1zM36 33h1v1h-1zM0 34h1v1h-1zM2 34h3v1h-3zM6 34h1v1h-1zM8 34h3v1h-3zM12 34h2v1h-2zM15 34h2v1h-2zM18 34h6v1h-6zM26 34h1v1h-1zM28 34h2v1h-2zM31 34h3v1h-3zM0 35h1v1h-1zM6 35h1v1h-1zM8 35h3v1h-3zM13 35h1v1h-1zM15 35h1v1h-1zM18 35h1v1h-1zM20 35h1v1h-1zM22 35h3v1h-3zM26 35h1v1h-1zM29 35h2v1h-2zM32 35h1v1h-1zM35 35h2v1h-2zM0 36h7v1h-7zM8 36h2v1h-2zM13 36h1v1h-1zM16 36h1v1h-1zM18 36h6v1h-6zM28 36h1v1h-1zM30 36h1v1h-1zM33 36h1v1h-1zM36 36h1v1h-1z" fill="#111"/>
      <rect x="13.4" y="13.4" width="10.2" height="10.2" fill="#fff"/>
      <rect x="14.1" y="14.1" width="8.8" height="8.7" rx="0.9" fill="#f1591c"/>
      <path d="M21.2 16.6C19.6 15.2 16.6 15.8 16 18.2C15.5 20.4 17.4 21.8 19.2 21.4C20.6 21.1 21.4 19.8 21.2 18.6C20.6 20 19.4 20.4 18.4 20C17.4 19.5 17.2 18 18 17.2C18.8 16.4 20.2 16.4 21.2 16.6Z" fill="#fff"/>
      <path d="M19 18.4C19.8 17.6 20.8 17.6 21.6 17.9C20.8 18 20.2 18.4 19.9 19Z" fill="#fff"/>
    </svg>
  </div>
</div>

</body>
</html>
